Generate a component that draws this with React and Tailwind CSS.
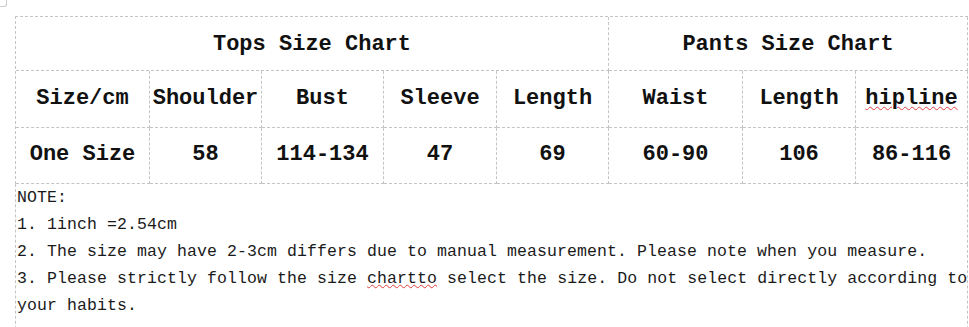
import React from "react";

const cell =
  "flex items-center justify-center border-r border-b border-dashed border-[#c4c4c4] whitespace-nowrap";

export default function App() {
  const heads = ["Size/cm", "Shoulder", "Bust", "Sleeve", "Length", "Waist", "Length"];
  const vals = ["One Size", "58", "114-134", "47", "69", "60-90", "106", "86-116"];
  return (
    <div className="relative w-[969px] h-[327px] overflow-hidden bg-white text-black">
      <div className="absolute left-0 top-0 w-[7px] h-[7px] border-r border-b border-[#cfcfcf] rounded-br-[3px]" />
      <div className="pt-[16px] pl-[15px]">
        <div
          className="grid w-[953px] grid-cols-[134px_112px_122px_113px_112px_134px_113px_112px] grid-rows-[54px_57px_56px] border-l border-t border-dashed border-[#c4c4c4] font-bold text-[22px] text-[#111]"
          style={{ fontFamily: '"Liberation Mono", monospace' }}
        >
          <div className={`${cell} col-span-5 pt-[1px]`}>Tops Size Chart</div>
          <div className={`${cell} col-span-3 pt-[1px]`}>Pants Size Chart</div>
          {heads.map((h, i) => (
            <div key={i} className={`${cell} pb-[2px]`}>
              {h}
            </div>
          ))}
          <div className={`${cell} pb-[2px]`}>
            <span className="underline decoration-wavy decoration-[#e04040] decoration-1 underline-offset-[2px]">
              hipline
            </span>
          </div>
          {vals.map((v, i) => (
            <div key={i} className={`${cell} pb-[2px]`}>
              {v}
            </div>
          ))}
        </div>
        <div
          className="w-[953px] h-[150px] border-l border-r border-dashed border-[#c4c4c4] pl-[1px] text-[16.5px] tracking-[0.1px] leading-[27px] text-[#1a1a1a] whitespace-nowrap"
          style={{ fontFamily: '"Liberation Mono", monospace' }}
        >
          <div>NOTE:</div>
          <div>1. 1inch =2.54cm</div>
          <div>2. The size may have 2-3cm differs due to manual measurement. Please note when you measure.</div>
          <div>
            3. Please strictly follow the size{" "}
            <span className="underline decoration-wavy decoration-[#e04040] decoration-1 underline-offset-[1px]">
              chartto
            </span>{" "}
            select the size. Do not select directly according to
          </div>
          <div>your habits.</div>
        </div>
      </div>
    </div>
  );
}
